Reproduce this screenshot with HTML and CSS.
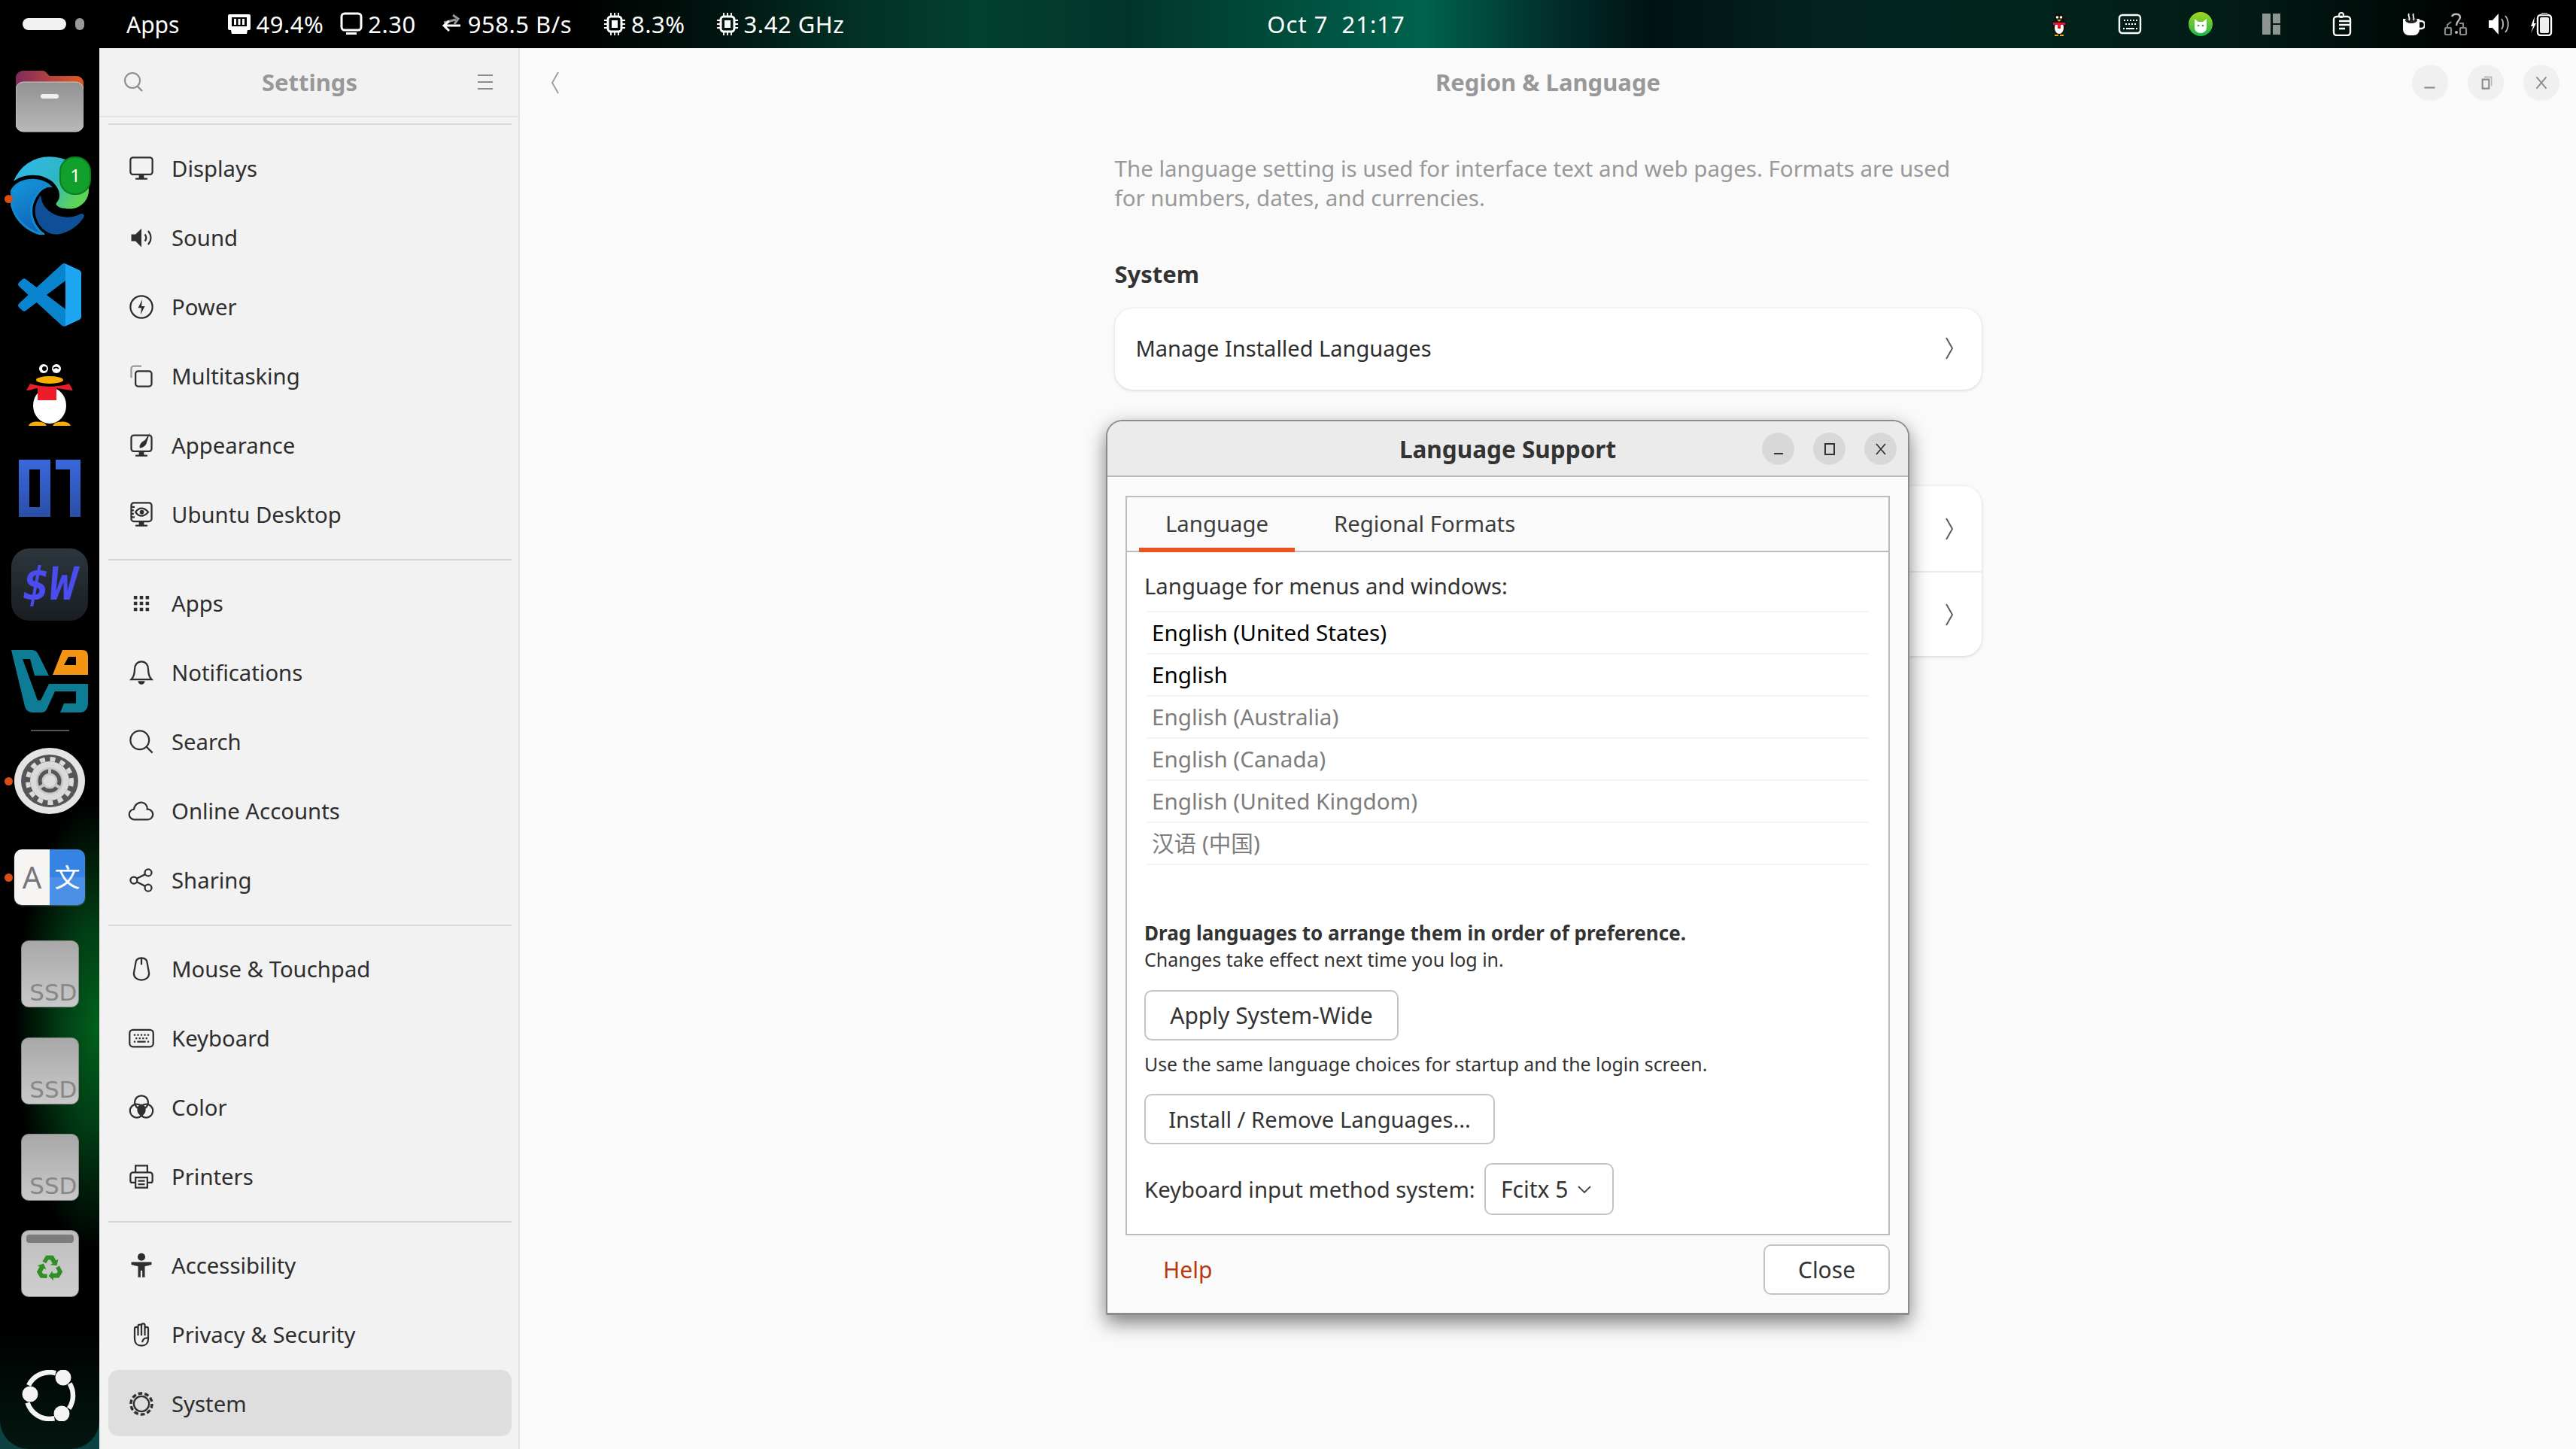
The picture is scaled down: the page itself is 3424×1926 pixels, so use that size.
FILE: index.html
```html
<!DOCTYPE html>
<html lang="en">
<head>
<meta charset="utf-8">
<title>Region &amp; Language</title>
<link rel="stylesheet" href="styles.css">
</head>
<body>
<header class="panel">
  <span class="pill"></span><span class="pill-dot"></span>
  <span class="apps">Apps</span>
  <div class="stat stat-mem"><svg class="pi" viewBox="0 0 32 32"><path d="M3 3h26a2 2 0 0 1 2 2v17a2 2 0 0 1-2 2H3a2 2 0 0 1-2-2V5a2 2 0 0 1 2-2z" fill="#fff"/><path d="M6 7h20v12H6z" fill="#000"/><path d="M9 9h3v8H9zM14.500 9h3v8h-3zM20 9h3v8h-3zM5 24h22l-1 5H6z" fill="#fff"/></svg><span>49.4%</span></div>
  <div class="stat stat-load"><svg class="pi" viewBox="0 0 32 32"><rect x="3" y="2" width="26" height="22" rx="4" fill="none" stroke="#fff" stroke-width="3"/><path d="M9 27h14v3H9z" fill="#fff"/></svg><span>2.30</span></div>
  <div class="stat stat-net"><svg class="pi" viewBox="0 0 32 32"><path d="M6 14 22 10M18 4l7 5-5 7" fill="none" stroke="#999" stroke-width="3"/><path d="M28 18H8M13 12l-7 6 7 7" fill="none" stroke="#fff" stroke-width="3"/></svg><span>958.5 B/s</span></div>
  <div class="stat stat-cpu"><svg class="pi" viewBox="0 0 32 32"><rect x="7" y="6" width="18" height="20" rx="4" fill="none" stroke="#fff" stroke-width="3"/><rect x="12" y="11" width="8" height="10" fill="#fff"/><path d="M11 1v4M16 1v4M21 1v4M11 27v4M16 27v4M21 27v4M2 11h4M2 16h4M2 21h4M26 11h4M26 16h4M26 21h4" stroke="#fff" stroke-width="1.800"/></svg><span>8.3%</span></div>
  <div class="stat stat-freq"><svg class="pi" viewBox="0 0 32 32"><rect x="7" y="6" width="18" height="20" rx="4" fill="none" stroke="#fff" stroke-width="3"/><rect x="12" y="11" width="8" height="10" fill="#fff"/><path d="M11 1v4M16 1v4M21 1v4M11 27v4M16 27v4M21 27v4M2 11h4M2 16h4M2 21h4M26 11h4M26 16h4M26 21h4" stroke="#fff" stroke-width="1.800"/></svg><span>3.42 GHz</span></div>
  <div class="clock">Oct 7&nbsp; 21:17</div>
  <div class="tray tray-wide">
    <span class="slot"><svg class="ti" viewBox="0 0 32 32"><ellipse cx="16" cy="19" rx="9" ry="11" fill="#111"/><ellipse cx="16" cy="21" rx="6" ry="8" fill="#fff"/><circle cx="16" cy="8" r="7" fill="#111"/><circle cx="13.500" cy="7" r="1.800" fill="#fff"/><circle cx="18.500" cy="7" r="1.800" fill="#fff"/><path d="M13 10h6l-3 3z" fill="#f5a800"/><path d="M8 14h16v3H18v5h-4v-5H8z" fill="#e8132e"/><path d="M10 30h5v2h-5zM17 30h5v2h-5z" fill="#f5a800"/></svg></span>
    <span class="slot"><svg class="ti" viewBox="0 0 32 32"><rect x="2" y="4" width="28" height="24" rx="4" fill="none" stroke="#fff" stroke-width="2.400"/><path d="M8 10h2v2H8zM12 10h2v2h-2zM16 10h2v2h-2zM20 10h2v2h-2zM24 10h2v2h-2zM10 15h2v2h-2zM14 15h2v2h-2zM18 15h2v2h-2zM22 15h2v2h-2zM7 21h2v2H7zM11 21h11v2H11zM24 21h2v2h-2z" fill="#fff"/></svg></span>
    <span class="slot"><svg class="ti ti-cat" viewBox="0 0 32 32"><defs><linearGradient id="catg" x1="0" y1="0" x2="0" y2="1"><stop offset="0" stop-color="#a6d41f"/><stop offset="1" stop-color="#15b84a"/></linearGradient></defs><circle cx="16" cy="16" r="16" fill="url(#catg)"/><path d="M8 9l5 4h6l5-4v12a8 7 0 0 1-16 0z" fill="#fff"/><circle cx="13" cy="18" r="1.300" fill="#3cae3c"/><circle cx="19" cy="18" r="1.300" fill="#3cae3c"/></svg></span>
    <span class="slot"><svg class="ti" viewBox="0 0 32 32"><path d="M4 2h11v28H4zM18 2h10v13H18zM18 17h10v13H18z" fill="#8e9492"/></svg></span>
    <span class="slot"><svg class="ti" viewBox="0 0 32 32"><rect x="5" y="6" width="22" height="25" rx="4" fill="none" stroke="#fff" stroke-width="2.400"/><circle cx="15" cy="4" r="3" fill="none" stroke="#fff" stroke-width="2"/><path d="M12 12h14M12 17h14M12 22h8" stroke="#fff" stroke-width="2.400"/></svg></span>
  </div>
  <div class="tray tray-narrow">
    <span class="slot"><svg class="ti" viewBox="0 0 32 32"><path d="M3 9h22v14a8 8 0 0 1-8 8h-6a8 8 0 0 1-8-8z" fill="#fff"/><path d="M25 12h2a4 4 0 0 1 0 10h-2" fill="none" stroke="#fff" stroke-width="2.500"/><ellipse cx="14" cy="11" rx="8" ry="4" fill="#222"/><path d="M11 2c-2 3 2 5 0 9M17 2c-2 3 2 5 0 9" fill="none" stroke="#fff" stroke-width="1.800"/></svg></span>
    <span class="slot"><svg class="ti" viewBox="0 0 32 32"><path d="M11 6c2-5 11-4 11 1 0 4-5 5-5 11" fill="none" stroke="#bbb" stroke-width="2.400"/><circle cx="17" cy="27" r="2" fill="#bbb"/><path d="M5 20v-3l5-4" fill="none" stroke="#888" stroke-width="2"/><rect x="2" y="21" width="8" height="9" rx="1" fill="none" stroke="#888" stroke-width="2.200"/><rect x="22" y="21" width="8" height="9" rx="1" fill="none" stroke="#888" stroke-width="2.200"/><path d="M26 20v-5h-5" fill="none" stroke="#888" stroke-width="2"/></svg></span>
    <span class="slot"><svg class="ti" viewBox="0 0 32 32"><path d="M3 11h5l8-9v28l-8-9H3z" fill="#fff"/><path d="M20 9c3 4 3 10 0 14M25 5c5 6 5 16 0 22" fill="none" stroke="#bbb" stroke-width="1.800"/></svg></span>
    <span class="slot"><svg class="ti" viewBox="0 0 32 32"><path d="M7 6l-5 13h3l-3 9 7-13H6z" fill="#fff"/><rect x="11" y="4" width="18" height="27" rx="4" fill="none" stroke="#fff" stroke-width="2.400"/><rect x="16" y="1" width="8" height="3" fill="#999"/><rect x="14" y="7" width="12" height="21" rx="2" fill="#eee"/></svg></span>
  </div>
</header>

<div class="desk">
  <nav class="dock">
    <div class="dock-slot">
      <svg class="app-files" viewBox="0 0 90 82"><defs><linearGradient id="fold" x1="0" y1="0" x2="1" y2="0"><stop offset="0" stop-color="#7d2b5e"/><stop offset="1" stop-color="#e35a22"/></linearGradient><linearGradient id="filesb" x1="0" y1="0" x2="0" y2="1"><stop offset="0" stop-color="#929292"/><stop offset="1" stop-color="#b8b8b8"/></linearGradient></defs><path d="M0 12a10 10 0 0 1 10-12h26a6 6 0 0 1 5 3l4 4h36a9 9 0 0 1 9 9v20H0z" fill="url(#fold)"/><rect x="0" y="15" width="90" height="66" rx="10" fill="url(#filesb)" stroke="#c9c9c9"/><rect x="33" y="31" width="24" height="6" rx="3" fill="#f0f0f0"/></svg>
    </div>
    <div class="dock-slot">
      <i class="run-dot"></i>
      <svg class="app-edge" viewBox="0 0 24 24"><defs><linearGradient id="edgeA" x1="0" y1="0" x2="1" y2=".6"><stop offset="0" stop-color="#2fb8ee"/><stop offset=".6" stop-color="#2fb6c4"/><stop offset="1" stop-color="#5fd356"/></linearGradient><linearGradient id="edgeB" x1="0" y1="0" x2=".4" y2="1"><stop offset="0" stop-color="#149bdc"/><stop offset="1" stop-color="#1063b8"/></linearGradient></defs><path d="M21.860 17.860q.14 0 .25.12.1.13.1.25t-.11.33l-.32.46-.43.53-.44.5q-.21.25-.38.42l-.22.23q-.58.53-1.340 1.040-.76.51-1.600.91-.86.4-1.740.64t-1.670.24q-.9 0-1.690-.28-.8-.28-1.480-.78-.68-.5-1.220-1.170-.53-.66-.92-1.440-.38-.77-.58-1.600-.2-.83-.2-1.670 0-1 .32-1.960.33-.97.87-1.800.14.95.55 1.770.41.82 1.020 1.500.6.68 1.380 1.210.78.54 1.640.9.86.36 1.770.56.92.2 1.800.2 1.120 0 2.180-.24 1.060-.23 2.060-.72l.2-.1.2-.05z" fill="#0f4f98" stroke="#0f4f98" stroke-width=".7"/><path d="M6.360 16.590q0 1.100.27 2.150.27 1.060.78 2.030.51.96 1.240 1.770.74.82 1.660 1.400-1.470-.2-2.800-.74-1.330-.55-2.480-1.370-1.150-.83-2.080-1.900-.92-1.070-1.580-2.330T.36 14.940Q0 13.540 0 12.060q0-.81.32-1.490.31-.68.83-1.230.53-.55 1.200-.96.66-.4 1.350-.66.74-.27 1.500-.39.78-.12 1.550-.12.7 0 1.420.1.72.12 1.400.35.68.23 1.320.57.63.35 1.160.83-.35 0-.7.07-.33.07-.65.23v-.02q-.63.28-1.200.74-.57.46-1.050 1.040-.48.58-.87 1.260-.38.67-.65 1.390-.27.71-.42 1.440-.15.72-.15 1.380z" fill="url(#edgeB)" stroke="#128ad0" stroke-width=".7"/><path d="M11.960.06q1.700 0 3.330.39 1.630.38 3.070 1.150 1.430.77 2.620 1.930 1.180 1.160 1.980 2.700.49.94.76 1.960.28 1 .28 2.080 0 .89-.23 1.700-.24.8-.69 1.480-.45.68-1.100 1.220-.64.53-1.450.88-.54.24-1.110.36-.58.13-1.160.13-.42 0-.97-.03-.54-.03-1.100-.12-.55-.1-1.050-.28-.5-.19-.84-.5-.12-.09-.23-.24-.1-.16-.1-.33 0-.15.16-.35.16-.2.35-.5.2-.28.36-.68.16-.4.16-.95 0-1.060-.4-1.960-.4-.91-1.060-1.640-.66-.74-1.520-1.280-.86-.55-1.790-.89-.84-.3-1.720-.44-.87-.14-1.760-.14-1.550 0-3.060.45T.94 7.550q.71-1.740 1.810-3.130 1.100-1.380 2.520-2.340Q6.700 1.120 8.400.6 10.100.05 11.960.06z" fill="url(#edgeA)"/></svg>
      <span class="badge">1</span>
    </div>
    <div class="dock-slot">
      <svg class="app-code" viewBox="0 0 24 24"><path d="M23.150 2.587L18.210.21a1.494 1.494 0 0 0-1.705.29l-9.460 8.630-4.120-3.128a.999.999 0 0 0-1.276.057L.327 7.261A1 1 0 0 0 .326 8.740L3.899 12 .326 15.260a1 1 0 0 0 .001 1.479L1.650 17.940a.999.999 0 0 0 1.276.057l4.120-3.128 9.460 8.630a1.492 1.492 0 0 0 1.704.29l4.942-2.377A1.500 1.500 0 0 0 24 20.060V3.939a1.500 1.500 0 0 0-.85-1.352zm-5.146 14.861L10.826 12l7.178-5.448v10.896z" fill="#0a84cf"/><path d="M18 0.200l5.150 2.387A1.500 1.500 0 0 1 24 3.939V20.060a1.500 1.500 0 0 1-.85 1.353L18 23.800z" fill="#1fa6f2"/></svg>
    </div>
    <div class="dock-slot">
      <svg class="app-qq" viewBox="0 0 66 84"><ellipse cx="33" cy="52" rx="23" ry="30" fill="#000"/><ellipse cx="33" cy="56" rx="22" ry="24" fill="#fff"/><circle cx="25" cy="7" r="6" fill="#fff"/><circle cx="42" cy="7" r="6" fill="#fff"/><circle cx="26" cy="7" r="3" fill="#000"/><path d="M38 7c2-2 5-2 7 0" stroke="#000" stroke-width="2" fill="none"/><ellipse cx="33" cy="22" rx="18" ry="5" fill="#f7ae00"/><path d="M2 36l5-9c16 5 36 5 52 0l5 9c-6 0-18-3-22-3v16H17V33C13 33 8 36 2 36z" fill="#ec1c2a"/><path d="M5 83c2-6 14-7 22-3l2 3zM37 83l2-3c8-4 20-3 22 3z" fill="#f7ae00"/></svg>
    </div>
    <div class="dock-slot">
      <svg class="app-01" viewBox="0 0 82 76"><defs><linearGradient id="oneg" x1="0" y1="0" x2="0" y2="1"><stop offset="0" stop-color="#3a68dd"/><stop offset="1" stop-color="#2a4fa6"/></linearGradient></defs><path d="M0 0h42v76H0zM14 13v50h14V13z" fill="url(#oneg)" fill-rule="evenodd"/><path d="M49 0h33v76H68V13H49z" fill="url(#oneg)"/></svg>
    </div>
    <div class="dock-slot">
      <div class="app-sw">$W</div>
    </div>
    <div class="dock-slot">
      <svg class="app-vs" viewBox="0 0 102 83"><path d="M0 0h26c6 0 8 2 10 6l14 28H31l-6-22H15l20 55h4l11-22h52v25c0 7-3 13-11 13H65l5-12h16V55H58l-11 24c-2 3-4 4-8 4H29c-5 0-9-2-11-8z" fill="#0c7d94"/><path d="M68 0h26c6 0 8 3 8 9v24H55zM70 20h16V9H76z" fill="#f39512" fill-rule="evenodd"/></svg>
    </div>
    <hr class="dock-sep">
    <div class="dock-slot">
      <i class="run-dot"></i>
      <svg class="app-gear" viewBox="0 0 94 88"><ellipse cx="47" cy="44" rx="47" ry="44" fill="#e4e4e4"/><ellipse cx="47" cy="44" rx="38" ry="35" fill="#555"/><circle cx="47" cy="44" r="26" fill="#dadada"/><circle cx="47" cy="44" r="29" fill="none" stroke="#dadada" stroke-width="6" stroke-dasharray="7 6.700"/><circle cx="47" cy="44" r="18" fill="#c6c6c6"/><circle cx="47" cy="44" r="13" fill="none" stroke="#555" stroke-width="5"/><path d="M47 44V26M47 44 32 54M47 44l15 10" stroke="#c6c6c6" stroke-width="4"/><circle cx="47" cy="44" r="8" fill="#dcdcdc"/></svg>
    </div>
    <div class="dock-slot">
      <i class="run-dot"></i>
      <div class="app-trans"><span class="t-a">A</span><span class="t-z">文</span></div>
    </div>
    <div class="dock-slot"><div class="app-ssd"><span>SSD</span></div></div>
    <div class="dock-slot"><div class="app-ssd"><span>SSD</span></div></div>
    <div class="dock-slot"><div class="app-ssd"><span>SSD</span></div></div>
    <div class="dock-slot">
      <div class="app-trash"><i class="trash-lid"></i>
        <svg class="recycle" viewBox="0 0 40 40" fill="#2f8f24"><path d="M15 3h10l4 7 3-2-2 9-9-1 3-2-3-5h-3l-3 5-5-3z"/><path d="M15 3h10l4 7 3-2-2 9-9-1 3-2-3-5h-3l-3 5-5-3z" transform="rotate(120 20 21)"/><path d="M15 3h10l4 7 3-2-2 9-9-1 3-2-3-5h-3l-3 5-5-3z" transform="rotate(240 20 21)"/></svg>
      </div>
    </div>
    <svg class="ubuntu" viewBox="0 0 74 68"><path d="M9.100 20.400A31 31 0 0 1 45 4.100M63.600 18A31 31 0 0 1 62.700 51.300M43.400 64.300A31 31 0 0 1 7.500 43.600" fill="none" stroke="#f4f4f4" stroke-width="6.500"/><circle cx="11" cy="32" r="10.500" fill="#f4f4f4"/><circle cx="55" cy="10" r="10.500" fill="#f4f4f4"/><circle cx="53" cy="58" r="10.500" fill="#f4f4f4"/></svg>
  </nav>

  <aside class="sidebar">
    <div class="side-head">
      <svg class="ico-head" viewBox="0 0 32 32"><circle cx="14" cy="14" r="10" fill="none" stroke="#8c8c8c" stroke-width="2"/><path d="M21 22l6 6" stroke="#8c8c8c" stroke-width="2.400"/></svg>
      <span class="side-title">Settings</span>
      <svg class="ico-head" viewBox="0 0 32 32"><path d="M6 7h20M6 16h20M6 25h20" stroke="#8c8c8c" stroke-width="2"/></svg>
    </div>
    <hr class="side-sep side-sep-first">
    <a class="nav"><svg viewBox="0 0 32 32"><rect x="3" y="3" width="26" height="20" rx="3"/><path class="f" d="M13 23h6v4h4v2H9v-2h4z"/></svg>Displays</a>
    <a class="nav"><svg viewBox="0 0 32 32"><path class="f" d="M4 12h5l7-7v22l-7-7H4z"/><path d="M20 12c2 2.500 2 5.500 0 8M24 8c4 5 4 11 0 16"/></svg>Sound</a>
    <a class="nav"><svg viewBox="0 0 32 32"><circle cx="16" cy="16" r="13"/><path class="f" d="M17 7l-5 10h4l-1 8 5-10h-4z"/></svg>Power</a>
    <a class="nav"><svg viewBox="0 0 32 32"><path class="l" d="M4 18V7a3 3 0 0 1 3-3h9"/><rect x="9" y="10" width="19" height="18" rx="3"/></svg>Multitasking</a>
    <a class="nav"><svg viewBox="0 0 32 32"><rect x="4" y="4" width="24" height="19" rx="3"/><path class="f" d="M13 23h6v4h4v2H9v-2h4zM26 1l-6 9c-3 1-7 5-6 9 3 0 7-2 8-6z"/></svg>Appearance</a>
    <a class="nav"><svg viewBox="0 0 32 32"><rect x="4" y="2" width="24" height="22" rx="3"/><path d="M9 13c4-6 10-6 15 0-5 6-11 6-15 0z"/><circle class="f" cx="16.500" cy="13" r="2.500"/><path d="M4 7h4M4 11h3M4 15h3M4 19h4"/><path class="f" d="M13 24h6v4h4v2H9v-2h4z"/></svg>Ubuntu Desktop</a>
    <hr class="side-sep">
    <a class="nav"><svg viewBox="0 0 32 32"><path class="f" d="M7 7h4v4H7zM14 7h4v4h-4zM21 7h4v4h-4zM7 14h4v4H7zM14 14h4v4h-4zM21 14h4v4h-4zM7 21h4v4H7zM14 21h4v4h-4zM21 21h4v4h-4z"/></svg>Apps</a>
    <a class="nav"><svg viewBox="0 0 32 32"><path d="M16 3c-5 0-8 4-8 9 0 6-1 9-4 12h24c-3-3-4-6-4-12 0-5-3-9-8-9z"/><path class="f" d="M12 26h8a4 4 0 0 1-8 0z"/></svg>Notifications</a>
    <a class="nav"><svg viewBox="0 0 32 32"><circle cx="14" cy="14" r="11"/><path d="M22 22l7 7"/></svg>Search</a>
    <a class="nav"><svg viewBox="0 0 32 32"><path d="M8 26a6 6 0 0 1-1-12c1-6 6-9 10-8 4 1 6 4 6 8a6 6 0 0 1 1 12z"/></svg>Online Accounts</a>
    <a class="nav"><svg viewBox="0 0 32 32"><circle cx="7" cy="16" r="4"/><circle cx="24" cy="7" r="4"/><circle cx="24" cy="25" r="4"/><path d="M10.500 14l10-5M10.500 18l10 5"/></svg>Sharing</a>
    <hr class="side-sep">
    <a class="nav"><svg viewBox="0 0 32 32"><path d="M9 10c0-5 3-7 7-7s7 2 7 7l2 11c0 5-4 8-9 8s-9-3-9-8z"/><path d="M16 3v8"/></svg>Mouse &amp; Touchpad</a>
    <a class="nav"><svg viewBox="0 0 32 32"><rect x="2" y="6" width="28" height="20" rx="4"/><path class="f" d="M7 11h2v2H7zM11 11h2v2h-2zM15 11h2v2h-2zM19 11h2v2h-2zM23 11h2v2h-2zM9 15h2v2H9zM13 15h2v2h-2zM17 15h2v2h-2zM21 15h2v2h-2zM7 19h2v2H7zM11 19h10v2H11zM23 19h2v2h-2z"/></svg>Keyboard</a>
    <a class="nav"><svg viewBox="0 0 32 32"><circle cx="16" cy="10" r="8"/><circle cx="10.500" cy="20" r="8"/><circle cx="21.500" cy="20" r="8"/><path class="f" d="M16 12a7 7 0 0 1 5 7 8 8 0 0 1-5 7 8 8 0 0 1-5-7 7 7 0 0 1 5-7z"/></svg>Color</a>
    <a class="nav"><svg viewBox="0 0 32 32"><path d="M9 11V3h14v8M9 23H5a2 2 0 0 1-2-2v-7a3 3 0 0 1 3-3h20a3 3 0 0 1 3 3v7a2 2 0 0 1-2 2h-4"/><path d="M9 17h14v12H9zM12 21h8M12 25h8"/></svg>Printers</a>
    <hr class="side-sep">
    <a class="nav"><svg viewBox="0 0 32 32"><circle class="f" cx="16" cy="6" r="4.500"/><path class="f" d="M4 12h24v3l-8 2v13h-3v-8h-2v8h-3V17l-8-2z"/></svg>Accessibility</a>
    <a class="nav"><svg viewBox="0 0 32 32"><path d="M8 17V9a2 2 0 0 1 4 0V6a2 2 0 0 1 4 0v-1a2 2 0 0 1 4 0v4a2 2 0 0 1 4 0v12c0 5-3 8-8 8s-8-3-8-8zM12 9v8M16 6v11M20 5v12M24 20c-4-1-7 2-7 5"/></svg>Privacy &amp; Security</a>
    <a class="nav nav-on"><svg viewBox="0 0 32 32"><circle cx="16" cy="16" r="9"/><circle cx="16" cy="16" r="12.500" class="w"/></svg>System</a>
  </aside>

  <main class="content">
    <div class="head">
      <svg class="back" viewBox="0 0 14 32"><path d="M11 2 3 16l8 14" fill="none" stroke="#999" stroke-width="1.800"/></svg>
      <h1 class="head-title">Region &amp; Language</h1>
      <div class="wm">
        <span class="wm-btn"><svg viewBox="0 0 24 24"><path d="M5 18h13" stroke="#8c8c8c" stroke-width="2"/></svg></span>
        <span class="wm-btn"><svg viewBox="0 0 24 24"><path d="M8 8h8v11H8z" fill="none" stroke="#8c8c8c" stroke-width="2"/><path d="M10 5h9v11" fill="none" stroke="#b5b5b5" stroke-width="1.500"/></svg></span>
        <span class="wm-btn"><svg viewBox="0 0 24 24"><path d="M6 5l12 14M18 5 6 19" stroke="#8c8c8c" stroke-width="1.800"/></svg></span>
      </div>
    </div>
    <section class="page">
      <p class="intro">The language setting is used for interface text and web pages. Formats are used for numbers, dates, and currencies.</p>
      <h2 class="sect">System</h2>
      <div class="card"><div class="card-row card-row-one"><span>Manage Installed Languages</span><svg class="chev" viewBox="0 0 14 32"><path d="M3 2l8 14-8 14" fill="none" stroke="#5e5e5e" stroke-width="2"/></svg></div></div>
      <div class="card card-two">
        <div class="card-row card-row-half"><svg class="chev" viewBox="0 0 14 32"><path d="M3 2l8 14-8 14" fill="none" stroke="#5e5e5e" stroke-width="2"/></svg></div>
        <div class="card-row card-row-half card-row-line"><svg class="chev" viewBox="0 0 14 32"><path d="M3 2l8 14-8 14" fill="none" stroke="#5e5e5e" stroke-width="2"/></svg></div>
      </div>
    </section>

    <div class="dialog">
      <div class="dlg-title">
        <span class="dlg-name">Language Support</span>
        <div class="dlg-wm">
          <span class="dlg-btn"><svg viewBox="0 0 24 24"><path d="M6 18h12" stroke="#333" stroke-width="2"/></svg></span>
          <span class="dlg-btn"><svg viewBox="0 0 24 24"><rect x="6" y="5" width="12" height="14" fill="none" stroke="#333" stroke-width="2"/></svg></span>
          <span class="dlg-btn"><svg viewBox="0 0 24 24"><path d="M6 5l12 14M18 5 6 19" stroke="#333" stroke-width="1.800"/></svg></span>
        </div>
      </div>
      <div class="dlg-body">
        <div class="book">
          <div class="tabs">
            <span class="tab tab-on">Language</span>
            <span class="tab">Regional Formats</span>
          </div>
          <div class="book-page">
            <div class="lbl">Language for menus and windows:</div>
            <ul class="langs">
              <li class="on">English (United States)</li>
              <li class="on">English</li>
              <li>English (Australia)</li>
              <li>English (Canada)</li>
              <li>English (United Kingdom)</li>
              <li>汉语 (中国)</li>
            </ul>
            <div class="hint-b">Drag languages to arrange them in order of preference.</div>
            <div class="hint">Changes take effect next time you log in.</div>
            <div class="btn btn-apply">Apply System-Wide</div>
            <div class="hint hint-use">Use the same language choices for startup and the login screen.</div>
            <div class="btn btn-install">Install / Remove Languages...</div>
            <div class="kbd">
              <span>Keyboard input method system:</span>
              <span class="btn btn-combo">Fcitx 5<svg class="caret" viewBox="0 0 20 12"><path d="M2 2l8 8 8-8" fill="none" stroke="#444" stroke-width="1.800"/></svg></span>
            </div>
          </div>
        </div>
        <div class="dlg-foot">
          <span class="help">Help</span>
          <span class="btn btn-close">Close</span>
        </div>
      </div>
    </div>
  </main>
</div>
</body>
</html>
```

FILE: styles.css
```css
* { box-sizing: border-box; }
html, body { margin: 0; height: 100%; }
body {
  width: 3424px; height: 1926px; overflow: hidden;
  font-family: "Noto Sans", "Noto Sans CJK SC", sans-serif;
  font-size: 29.300px; color: #2e2e2e; background: #fafafa;
  display: flex; flex-direction: column;
}

/* top panel */
.panel {
  height: 64px; flex: none; display: flex; align-items: center; color: #fff; padding-left: 30px; font-size: 31px;
  background: linear-gradient(90deg, #000 0, #000 760px, #01140f 950px, #023326 1150px, #02402f 1300px, #02352a 1500px, #00634d 1890px, #022f2c 2060px, #001313 2195px, #03221f 2400px, #02241c 2700px, #021a14 3000px, #000 3300px);
}
.pill { width: 58px; height: 16px; border-radius: 8px; background: #f2f2f2; }
.pill-dot { width: 12px; height: 16px; border-radius: 6px; background: #999; margin-left: 12px; }
.apps { margin-left: 56px; font-size: 30px; }
.stat { display: flex; align-items: center; gap: 6px; letter-spacing: .5px; }
.pi { width: 32px; height: 32px; flex: none; }
.stat-mem { margin-left: 64px; }
.stat-load { margin-left: 21px; }
.stat-net { margin-left: 31px; }
.stat-cpu { margin-left: 41px; }
.stat-freq { margin-left: 40px; }
.clock { margin-left: 562px; letter-spacing: 1px; }
.tray { display: flex; }
.tray-wide { margin-left: auto; }
.tray-wide .slot { width: 94px; }
.tray-narrow { margin-left: 18px; padding-right: 18px; }
.tray-narrow .slot { width: 57px; }
.slot { display: flex; align-items: center; justify-content: center; }
.ti { width: 32px; height: 32px; }

/* dock */
.desk { flex: 1; display: flex; min-height: 0; background: linear-gradient(90deg, #0c4243 132px, #fafafa 132px); }
.dock {
  width: 132px; flex: none; padding-top: 7px; position: relative; display: flex; flex-direction: column; align-items: center;
  border-radius: 0 0 38px 38px;
  background:
    radial-gradient(ellipse 110px 300px at 130px 1300px, #02601c 0, #013d14 45%, rgba(0,0,0,0) 100%),
    linear-gradient(180deg, #000 0, #000 1700px, #03160f 1860px);
}
.dock-slot { height: 128.400px; width: 100%; flex: none; display: flex; align-items: center; justify-content: center; position: relative; }
.dock-sep { width: 51px; height: 2px; flex: none; margin: 0 0 2px; border: 0; background: #555; }
.run-dot { position: absolute; left: 6px; top: 50%; width: 11px; height: 11px; margin-top: -5px; border-radius: 50%; background: #d94d14; }
.badge { position: absolute; left: 79px; top: 9px; width: 42px; height: 51px; border-radius: 20px; background: #12a02c; border: 2px solid #0d7d22; color: #fff; font-size: 24px; line-height: 46px; text-align: center; }
.app-files { width: 90px; height: 82px; }
.app-edge { width: 104px; height: 104px; margin-top: -8px; }
.app-code { width: 84px; height: 84px; }
.app-qq { width: 66px; height: 84px; margin-top: 10px; }
.app-01 { width: 82px; height: 76px; }
.app-sw { width: 102px; height: 96px; border-radius: 24px; background: linear-gradient(180deg, #2c363d, #191d22); color: #4b4cf0; font: italic bold 60px/94px "DejaVu Sans Mono", monospace; text-align: center; }
.app-vs { width: 102px; height: 83px; }
.app-gear { width: 94px; height: 88px; }
.app-trans { width: 94px; height: 74px; border-radius: 10px; display: flex; overflow: hidden; box-shadow: 0 1px 2px rgba(255,255,255,.3); }
.t-a { flex: 1; background: #f6f5f4; color: #77767b; font-size: 40px; line-height: 74px; text-align: center; }
.t-z { flex: 1; background: linear-gradient(180deg, #3584e4 50%, #4a90e6 50%); color: #fff; font: 34px/72px "Noto Sans CJK SC", sans-serif; text-align: center; }
.app-ssd { width: 77px; height: 89px; border-radius: 10px; background: linear-gradient(180deg, #a8a8a8, #c9c9c9); border: 1px solid #888; position: relative; overflow: hidden; }
.app-ssd span { position: absolute; right: 1px; bottom: 3px; font: 31px/31px "DejaVu Sans", sans-serif; color: #878787; }
.app-trash { width: 77px; height: 89px; border-radius: 10px; background: linear-gradient(180deg, #bdbdbd, #cfcfcf); border: 1px solid #888; display: flex; flex-direction: column; align-items: center; padding-top: 5px; }
.trash-lid { width: 63px; height: 11px; border-radius: 4px; background: #7c7c7c; }
.recycle { width: 40px; height: 38px; margin-top: 14px; }
.ubuntu { width: 74px; height: 68px; margin-top: 77px; flex: none; }

/* sidebar */
.sidebar { width: 559px; flex: none; background: #f2f2f2; border-right: 2px solid #e4e4e4; padding: 0 9px 0 12px; }
.side-head { height: 92px; margin: 0 -9px 0 -12px; padding: 0 28px 0 30px; display: flex; align-items: center; justify-content: space-between; border-bottom: 2px solid #e2e2e2; }
.side-title { font-weight: 700; color: #989898; font-size: 31px; }
.ico-head { width: 32px; height: 32px; }
.side-sep { height: 2px; border: 0; margin: 16px 0 12px; background: #d8d8d8; }
.side-sep-first { margin: 8px 0 13px; }
.nav { display: flex; align-items: center; gap: 22px; height: 88px; margin-bottom: 4px; padding: 2px 0 0 26px; border-radius: 14px; }
.nav svg { width: 36px; height: 36px; flex: none; fill: none; stroke: #2e2e2e; stroke-width: 2; }
.nav svg .f { fill: #2e2e2e; stroke: none; }
.nav svg .l { stroke: #999; }
.nav svg .w { stroke-width: 3; stroke-dasharray: 5 2.800; }
.nav-on { background: #dedede; }

/* content */
.content { flex: 1; position: relative; background: #fafafa; display: flex; flex-direction: column; }
.head { height: 92px; flex: none; display: flex; align-items: center; justify-content: center; position: relative; padding-bottom: 2px; }
.head-title { margin: 0; font-size: 31px; font-weight: 700; color: #989898; }
.back { position: absolute; left: 40px; top: 30px; width: 14px; height: 32px; }
.wm { position: absolute; right: 22px; top: 22px; display: flex; gap: 26px; }
.wm-btn { width: 48px; height: 48px; border-radius: 50%; background: #f0f0f0; display: flex; align-items: center; justify-content: center; }
.wm-btn svg { width: 26px; height: 26px; }
.page { width: 1152px; margin: 0 auto; }
.intro { margin: 48px 0 0; font-size: 29.500px; line-height: 39px; color: #999; }
.sect { margin: 62px 0 0; font-size: 31px; line-height: 40px; font-weight: 700; color: #333; }
.card { margin-top: 26px; background: #fff; border-radius: 24px; box-shadow: 0 1px 4px rgba(0,0,0,.16); }
.card-row { height: 108px; display: flex; align-items: center; justify-content: space-between; padding: 0 36px 0 28px; color: #2e2e2e; font-size: 29px; }
.card-row-one { padding-bottom: 3px; }
.chev { width: 14px; height: 32px; margin-left: auto; }
.card-two { margin-top: 128px; }
.card-row-half { height: 113px; }
.card-row-line { border-top: 2px solid #ececec; }

/* dialog */
.dialog { position: absolute; left: 779px; top: 494px; width: 1068px; height: 1190px; background: #fafafa; border: 2px solid #8c8c8c; border-bottom-width: 3px; border-radius: 22px 22px 2px 2px; box-shadow: 0 10px 26px rgba(0,0,0,.5); display: flex; flex-direction: column; }
.dlg-title { height: 74px; flex: none; position: relative; background: #ebebeb; border-bottom: 2px solid #bcbcbc; border-radius: 20px 20px 0 0; display: flex; align-items: center; justify-content: center; }
.dlg-name { font-weight: 700; color: #333; font-size: 31.500px; }
.dlg-wm { position: absolute; right: 15px; top: 15px; display: flex; gap: 25px; }
.dlg-btn { width: 43px; height: 43px; border-radius: 50%; background: #d8d8d8; display: flex; align-items: center; justify-content: center; }
.dlg-btn svg { width: 24px; height: 24px; }
.dlg-body { flex: 1; padding: 25px 24px 0; display: flex; flex-direction: column; }
.book { height: 983px; border: 2px solid #bcbcbc; flex: none; display: flex; flex-direction: column; }
.tabs { height: 73px; flex: none; display: flex; padding-left: 16px; border-bottom: 2px solid #bcbcbc; background: #fafafa; }
.tab { height: 73px; line-height: 70px; color: #3d3d3d; }
.tab:first-child { padding: 0 35px; }
.tab:nth-child(2) { padding: 0 0 0 52px; }
.tab-on { border-bottom: 6px solid #e95420; }
.book-page { flex: 1; background: #fff; padding: 24px 24px 0 23px; display: flex; flex-direction: column; align-items: flex-start; }
.lbl { line-height: 42px; color: #333; }
.langs { list-style: none; margin: 12px 0 0 2px; padding: 0; width: 962px; border-top: 2px solid #f5f5f5; font-size: 29.600px; }
.langs li { height: 56px; line-height: 53px; padding-left: 8px; color: #7d7d7d; border-bottom: 2px solid #f5f5f5; }
.langs .on { color: #000; }
.hint-b { margin-top: 72px; font-size: 26px; line-height: 36px; font-weight: 700; color: #333; }
.hint { font-size: 25px; line-height: 34px; color: #333; }
.hint-use { margin-top: 14px; font-size: 24.800px; }
.btn { display: flex; align-items: center; justify-content: center; border: 2px solid #c4c4c4; border-radius: 10px; background: #fff; color: #333; font-size: 30px; }
.btn-apply { margin-top: 24px; height: 67px; width: 338px; }
.btn-install { margin-top: 23px; height: 67px; width: 466px; font-size: 29.200px; }
.kbd { margin-top: 25px; display: flex; align-items: center; gap: 12px; color: #333; }
.btn-combo { height: 69px; width: 172px; gap: 12px; padding-right: 6px; }
.caret { width: 20px; height: 12px; }
.dlg-foot { flex: 1; display: flex; justify-content: space-between; align-items: flex-start; padding: 12px 0 0 50px; font-size: 30px; }
.help { color: #b8390e; line-height: 67px; }
.btn-close { height: 67px; width: 168px; }
```
